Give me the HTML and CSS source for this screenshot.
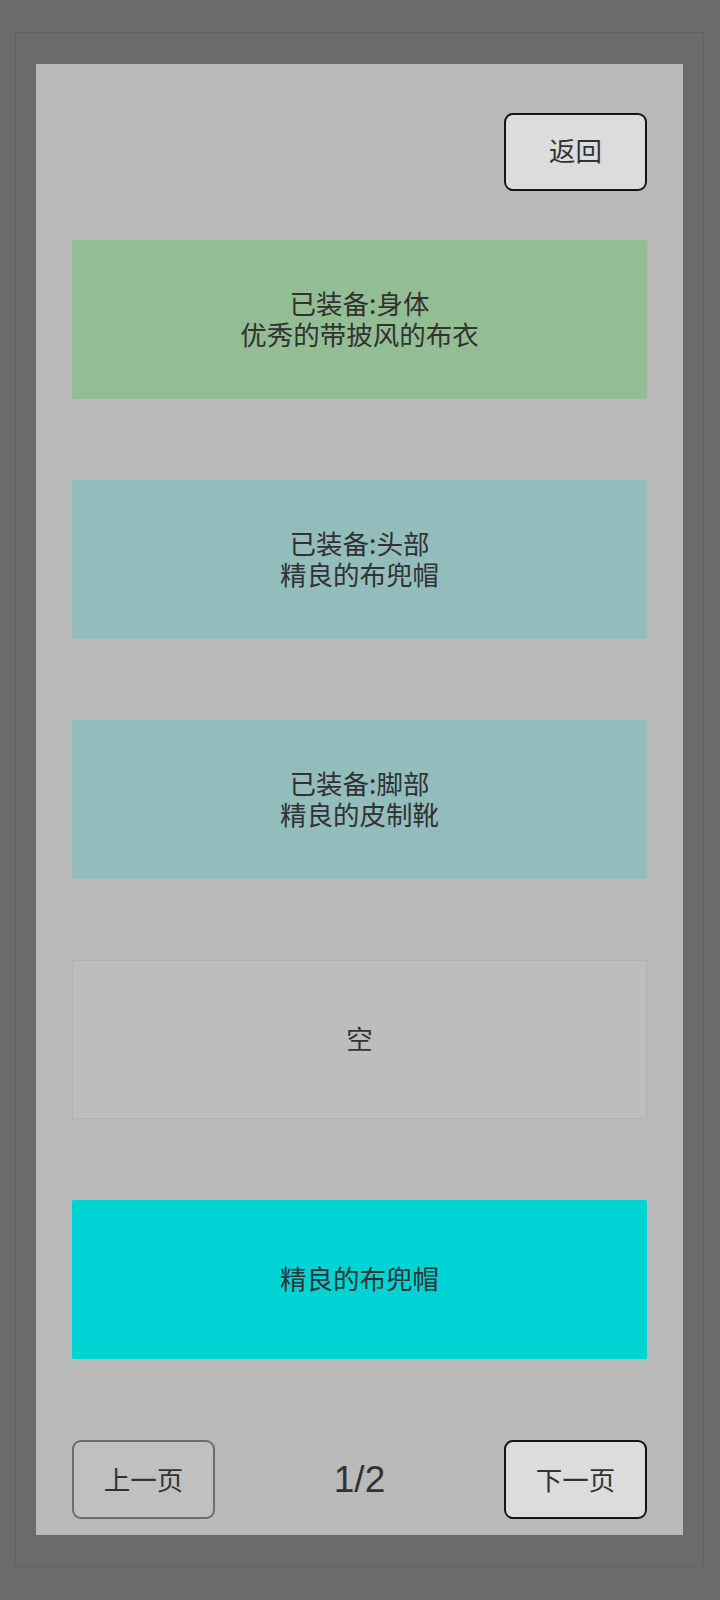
FILE: index.html
```html
<!DOCTYPE html>
<html lang="zh">
<head>
<meta charset="utf-8">
<title>装备</title>
<link rel="stylesheet" href="styles.css">
</head>
<body>
<div class="frame">
  <div class="panel">
    <div class="top-row">
      <button class="btn btn-active btn-back">返回</button>
    </div>
    <div class="slots">
      <div class="slot slot-green"><span class="line">已装备:身体</span><span class="line">优秀的带披风的布衣</span></div>
      <div class="slot slot-teal"><span class="line">已装备:头部</span><span class="line">精良的布兜帽</span></div>
      <div class="slot slot-teal"><span class="line">已装备:脚部</span><span class="line">精良的皮制靴</span></div>
      <div class="slot slot-empty"><span class="line">空</span></div>
      <div class="slot slot-cyan"><span class="line">精良的布兜帽</span></div>
    </div>
    <div class="pager">
      <button class="btn btn-disabled">上一页</button>
      <div class="page-num">1/2</div>
      <button class="btn btn-active">下一页</button>
    </div>
  </div>
</div>
</body>
</html>
```

FILE: styles.css
```css
html, body {
  margin: 0;
  padding: 0;
  background: #6b6b6b;
}
body {
  padding: 32px 16px 33px 15px;
  font-family: "Noto Sans CJK SC", "Noto Sans", sans-serif;
  color: #323232;
}
.frame {
  width: 689px;
  height: 1535px;
  box-sizing: border-box;
  border: 1px solid #636363;
  background: #6b6b6b;
  padding: 31px 20px;
}
.panel {
  width: 647px;
  height: 1471px;
  box-sizing: border-box;
  background: #b9b9b9;
  padding: 49px 36px 16px 36px;
  display: flex;
  flex-direction: column;
}
.top-row {
  display: flex;
  justify-content: flex-end;
}
.btn {
  width: 143px;
  height: 78px;
  box-sizing: border-box;
  border-radius: 9px;
  font-family: "Noto Sans CJK SC", "Noto Sans", sans-serif;
  font-size: 26.5px;
  color: #323232;
  padding: 0 0 2px 0;
  display: flex;
  align-items: center;
  justify-content: center;
}
.btn-back {
  padding-bottom: 6px;
}
.btn-active {
  background: #dcdcdc;
  border: 2px solid #141414;
}
.btn-disabled {
  background: #c0c0c0;
  border: 2px solid #6c6c6c;
}
.slots {
  margin-top: 49px;
  display: flex;
  flex-direction: column;
  gap: 81px;
}
.slot {
  height: 159px;
  box-sizing: border-box;
  border-radius: 2px;
  display: flex;
  flex-direction: column;
  align-items: center;
  justify-content: center;
  font-size: 26.5px;
  padding-bottom: 4px;
}
.line {
  display: block;
  line-height: 31px;
  height: 31px;
  white-space: nowrap;
}
.slot-green { background: #93bd93; }
.slot-teal { background: #93bdbd; }
.slot-empty {
  background: #bdbdbd;
  border: 1px solid #b0b0b0;
}
.slot-cyan { background: #00d3d3; }
.pager {
  margin-top: 81px;
  display: flex;
  align-items: center;
  justify-content: space-between;
}
.pager .btn { height: 79px; }
.page-num {
  font-family: "Liberation Sans", Arial, sans-serif;
  font-size: 37px;
  color: #323232;
  line-height: 1;
}
```
